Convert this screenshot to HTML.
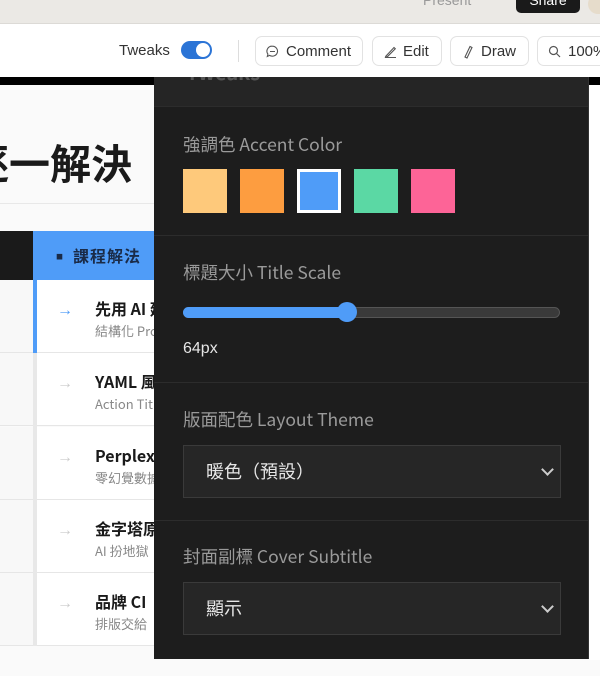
<!DOCTYPE html>
<html><head><meta charset="utf-8"><style>
*{margin:0;padding:0;box-sizing:border-box}
html,body{width:600px;height:676px;overflow:hidden}
body{position:relative;background:#fafafa;font-family:"Liberation Sans","Noto Sans CJK TC",sans-serif}
#w{position:absolute;left:0;top:0;width:600px;height:676px;overflow:hidden}
.abs{position:absolute}
.top{left:0;top:0;width:600px;height:24px;background:#ebe9e5;border-bottom:1px solid #dcdad6;overflow:hidden}
.tool{left:0;top:24px;width:600px;height:53px;background:#fff;overflow:hidden}
.btn{position:absolute;top:12px;height:30px;border:1px solid #e2e2e2;border-radius:7px;font-size:15px;color:#333;line-height:30px;padding-left:30px}
.row{position:absolute;left:37px;width:117px;height:73px;background:#fff;border-bottom:1px solid #e6e6e6;overflow:hidden}
.row b{position:absolute;left:58px;top:16px;font-size:16px;color:#1a1a1a;white-space:nowrap;font-family:"Noto Sans CJK TC",sans-serif;font-weight:700}
.row s{position:absolute;left:58px;top:41px;font-size:13px;color:#888;white-space:nowrap;text-decoration:none;font-family:"Noto Sans CJK TC",sans-serif}
.row i{position:absolute;left:20px;top:22px;font-style:normal;color:#ccc;font-size:16px}
.lc{position:absolute;left:0;width:33px;height:73px;background:#f8f8f8;border-bottom:1px solid #e6e6e6}
.panel{left:154px;top:77px;width:435px;height:582px;background:#1d1d1d;border-right:1px solid #333;font-family:"Noto Sans CJK TC",sans-serif;overflow:hidden}
.lab{position:absolute;left:29px;font-size:17.5px;color:#9a9a9a}
.sep{position:absolute;left:0;width:435px;height:1px;background:#2c2c2c}
.sw{position:absolute;top:92px;width:44px;height:44px}
.sel{position:absolute;left:29px;width:378px;height:53px;background:#262626;border:1px solid #3a3a3a;color:#e6e6e6;font-size:18px;line-height:51px;padding-left:22px}
.sel:after{content:"";position:absolute;right:8px;top:19px;width:7px;height:7px;border-right:2px solid #ccc;border-bottom:2px solid #ccc;transform:rotate(45deg)}
</style></head><body><div id="w">
<div class="abs top"><span class="abs" style="left:423px;top:-8px;font-size:14px;color:#999">Present</span>
<div class="abs" style="left:516px;top:-8px;width:64px;height:21px;background:#1a1a1a;border-radius:5px;color:#fff;font-size:14px;text-align:center;line-height:16px">Share</div>
<div class="abs" style="left:588px;top:-6px;width:12px;height:20px;border-radius:10px 0 0 10px;background:#e6dccb"></div></div>
<div class="abs tool">
<span class="abs" style="left:119px;top:18px;font-size:15px;color:#333">Tweaks</span>
<div class="abs" style="left:181px;top:17px;width:31px;height:18px;border-radius:9px;background:#2b74d6"><div class="abs" style="left:15px;top:2px;width:14px;height:14px;border-radius:50%;background:#fff"></div></div>
<div class="abs" style="left:238px;top:16px;width:1px;height:22px;background:#ddd"></div>
<div class="btn" style="left:255px;width:108px">Comment<svg class="abs" style="left:10px;top:8px" width="13" height="13" viewBox="0 0 13 13"><path d="M6.5 1.2a5.2 5 0 1 1-3 9.2L1.3 11.5l.6-2.4A5 5 0 0 1 6.5 1.2z M4 6.5h5" fill="none" stroke="#555" stroke-width="1.1"/></svg></div>
<div class="btn" style="left:372px;width:70px">Edit<svg class="abs" style="left:11px;top:8px" width="13" height="13" viewBox="0 0 13 13"><path d="M2 11L10 2.5l1.3 1.3L3.3 11.8 1.5 12zM1 12.5h11" fill="none" stroke="#555" stroke-width="1.1"/></svg></div>
<div class="btn" style="left:450px;width:79px">Draw<svg class="abs" style="left:11px;top:7px" width="12" height="15" viewBox="0 0 12 15"><path d="M3 13L8 2.5l2 1L5 14z" fill="none" stroke="#555" stroke-width="1.1"/></svg></div>
<div class="btn" style="left:537px;width:63px;border-right:none;border-radius:7px 0 0 7px;overflow:hidden;white-space:nowrap">100%<svg class="abs" style="left:10px;top:8px" width="13" height="13" viewBox="0 0 13 13"><circle cx="5.5" cy="5.5" r="4" fill="none" stroke="#555" stroke-width="1.2"/><path d="M8.5 8.5l3.5 3.5" stroke="#555" stroke-width="1.2"/></svg></div>
</div>
<div class="abs" style="left:0;top:77px;width:600px;height:8px;background:#000"></div>
<div class="abs" style="left:0;top:135px;width:154px;height:52px;overflow:hidden"><div class="abs" style="left:-32px;top:0;font-size:41px;font-weight:700;color:#1a1a1a;font-family:'Noto Sans CJK TC',sans-serif;line-height:52px;white-space:nowrap">逐一解決</div></div>
<div class="abs" style="left:0;top:203px;width:154px;height:1px;background:#e8e8e8"></div>
<div class="abs" style="left:0;top:231px;width:33px;height:49px;background:#1a1a1a"></div>
<div class="abs" style="left:33px;top:231px;width:121px;height:49px;background:#4f9cf8;font-family:'Noto Sans CJK TC',sans-serif;font-weight:700;font-size:16px;color:#1a2b48;line-height:49px;padding-left:23px;white-space:nowrap;letter-spacing:1px;overflow:hidden"><span style="font-size:7px;vertical-align:3px;margin-right:9px">■</span>課程解法</div>
<div class="abs" style="left:33px;top:280px;width:4px;height:366px;background:#e8e8e8"></div>
<div class="abs" style="left:33px;top:280px;width:4px;height:73px;background:#4f9cf8"></div>
<div class="lc" style="top:280px"></div><div class="lc" style="top:353px"></div><div class="lc" style="top:427px"></div><div class="lc" style="top:500px"></div><div class="lc" style="top:573px"></div>
<div class="row" style="top:280px"><i style="color:#4f9cf8">→</i><b>先用 AI 建構</b><s>結構化 Prompt</s></div>
<div class="row" style="top:353px"><i>→</i><b>YAML 風格</b><s>Action Title</s></div>
<div class="row" style="top:427px"><i>→</i><b>Perplexity</b><s>零幻覺數據</s></div>
<div class="row" style="top:500px"><i>→</i><b>金字塔原理</b><s>AI 扮地獄</s></div>
<div class="row" style="top:573px"><i>→</i><b>品牌 CI</b><s>排版交給</s></div>
<div class="abs" style="left:589px;top:85px;width:11px;height:575px;background:#fff"></div>
<div class="abs panel">
<div class="abs" style="left:0;top:0;width:435px;height:29px;background:#252525"></div>
<div class="abs" style="left:32px;top:-20px;font-size:20px;color:#555;font-weight:700">Tweaks</div>
<div class="sep" style="top:29px"></div>
<div class="lab" style="top:55px">強調色 Accent Color</div>
<div class="sw" style="left:29px;background:#fec97b"></div>
<div class="sw" style="left:86px;background:#fd9d40"></div>
<div class="sw" style="left:143px;background:#4f9cf8;border:3px solid #fff"></div>
<div class="sw" style="left:200px;background:#5bd8a4"></div>
<div class="sw" style="left:257px;background:#fd6497"></div>
<div class="sep" style="top:158px"></div>
<div class="lab" style="top:183px">標題大小 Title Scale</div>
<div class="abs" style="left:29px;top:230px;width:377px;height:11px;border-radius:6px;background:#3a3a3a;border:1px solid #555"></div>
<div class="abs" style="left:29px;top:230px;width:165px;height:11px;border-radius:6px;background:#4f9cf8"></div>
<div class="abs" style="left:183px;top:225px;width:20px;height:20px;border-radius:50%;background:#4f9cf8"></div>
<div class="abs" style="left:29px;top:263px;font-size:16px;color:#e6e6e6;font-family:'Liberation Sans',sans-serif">64px</div>
<div class="sep" style="top:305px"></div>
<div class="lab" style="top:330px">版面配色 Layout Theme</div>
<div class="sel" style="top:368px">暖色（預設）</div>
<div class="sep" style="top:443px"></div>
<div class="lab" style="top:467px">封面副標 Cover Subtitle</div>
<div class="sel" style="top:505px">顯示</div>
</div>
</div></body></html>
